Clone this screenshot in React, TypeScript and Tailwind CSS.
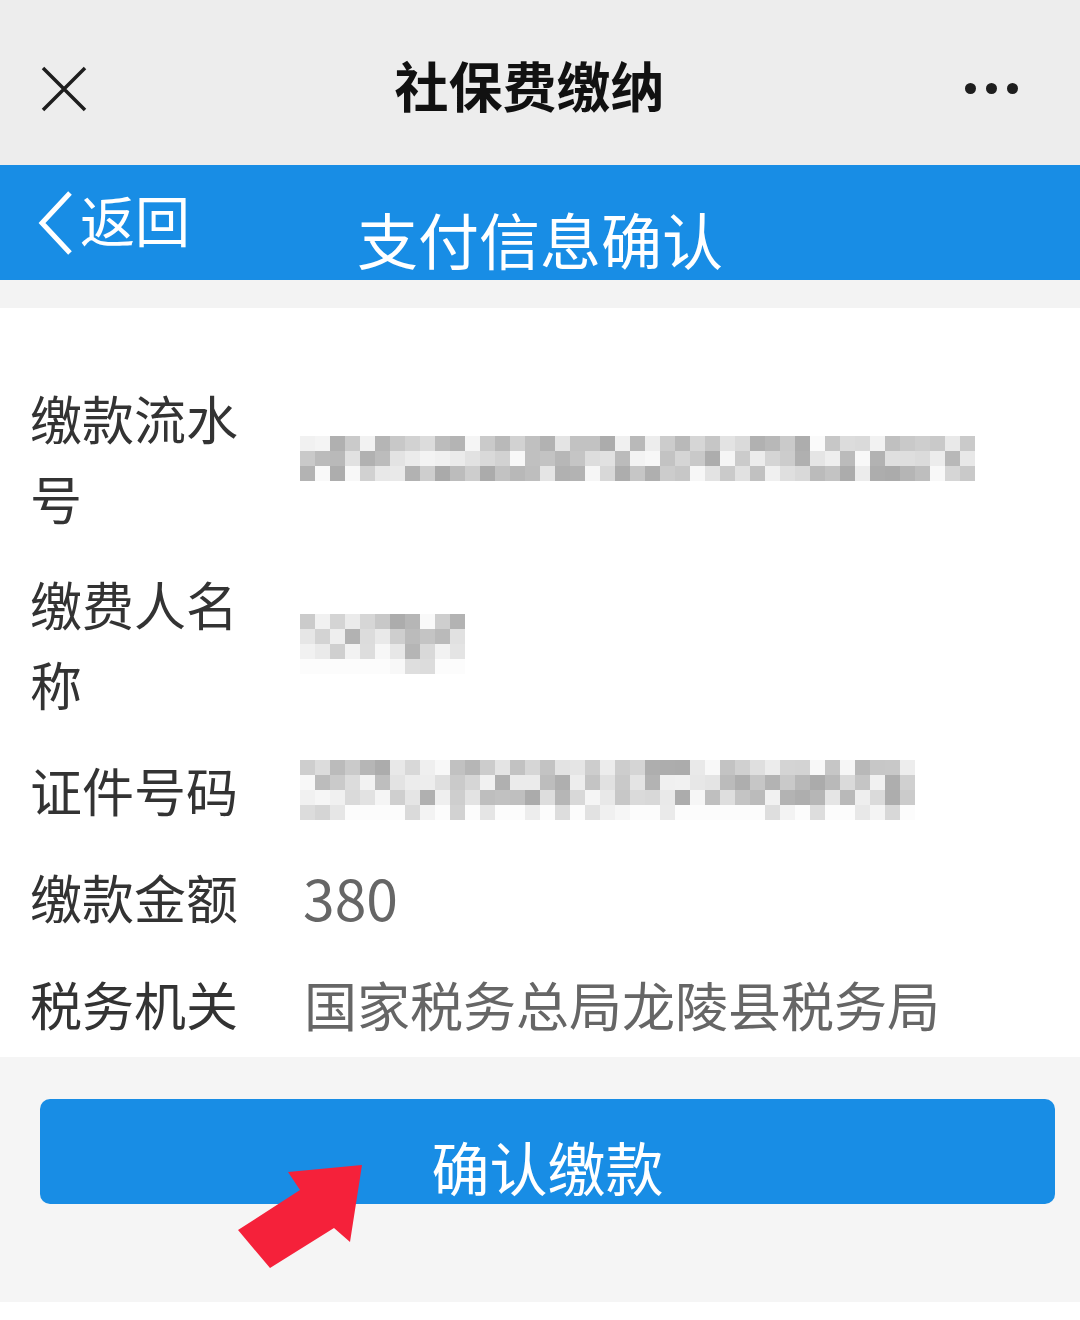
const FONT = "font-['Noto_Sans_CJK_SC','Noto_Sans',sans-serif]";

// pseudo-random grays for the mosaic blur
function mosaic(cols: number, rows: number, seed: number) {
  const cells: string[][] = [];
  let s = seed;
  for (let r = 0; r < rows; r++) {
    const row: string[] = [];
    for (let c = 0; c < cols; c++) {
      s = (s * 9301 + 49297) % 233280;
      const v = s / 233280;
      const fade = r === rows - 1 && rows > 3 ? 40 : 0;
      const g = Math.min(Math.round(170 + v * 80 + fade), 252);
      row.push(`rgb(${g},${g},${g})`);
    }
    cells.push(row);
  }
  return cells;
}

function Blur({ cols, rows, seed, cell = 15 }: { cols: number; rows: number; seed: number; cell?: number }) {
  const cells = mosaic(cols, rows, seed);
  return (
    <div className="flex flex-col">
      {cells.map((row, i) => (
        <div key={i} className="flex">
          {row.map((c, j) => (
            <div key={j} style={{ background: c, width: cell, height: cell }} />
          ))}
        </div>
      ))}
    </div>
  );
}

function Row({ label, children }: { label: string; children: React.ReactNode }) {
  return (
    <div className="flex items-center py-[13px]">
      <div className="w-[270px] shrink-0 pr-[30px] text-[52px] leading-[80px] text-[#333]">{label}</div>
      <div className="flex-1 text-[53px] leading-[80px] text-[#666]">{children}</div>
    </div>
  );
}

export default function App() {
  return (
    <div className={`w-[1080px] h-[1320px] bg-white flex flex-col ${FONT}`}>
      {/* WeChat top bar */}
      <div className="h-[165px] bg-[#ededed] flex items-center px-[40px] pt-[12px]">
        <svg width="48" height="48" viewBox="0 0 48 48" fill="none" className="shrink-0">
          <path d="M3 3 L45 45 M45 3 L3 45" stroke="#1e1e1e" strokeWidth="3.5" />
        </svg>
        <div className="flex-1 text-center text-[54px] font-bold text-[#111] pl-[6px] -mt-[8px]">社保费缴纳</div>
        <div className="flex gap-[10px] pr-[22px] shrink-0">
          <span className="w-[11px] h-[11px] rounded-full bg-[#1e1e1e]" />
          <span className="w-[11px] h-[11px] rounded-full bg-[#1e1e1e]" />
          <span className="w-[11px] h-[11px] rounded-full bg-[#1e1e1e]" />
        </div>
      </div>

      {/* Blue header */}
      <div className="relative h-[115px] bg-[#188de5] text-white">
        <div className="absolute left-[36px] top-[24px] flex items-center">
          <svg width="40" height="68" viewBox="0 0 40 68" fill="none">
            <path d="M34 4 L6 34 L34 64" stroke="white" strokeWidth="5" strokeLinejoin="miter" />
          </svg>
          <span className="text-[55px] leading-[60px] ml-[4px] -mt-[10px]">返回</span>
        </div>
        <div className="pt-[34px] text-center text-[61px] leading-[80px]">支付信息确认</div>
      </div>

      <div className="h-[28px] bg-[#f3f3f3]" />

      {/* Info list */}
      <div className="px-[30px] pt-[57px]">
        <Row label="缴款流水号">
          <Blur cols={45} rows={3} seed={17} />
        </Row>
        <Row label="缴费人名称">
          <Blur cols={11} rows={4} seed={5} />
        </Row>
        <Row label="证件号码">
          <Blur cols={41} rows={4} seed={31} />
        </Row>
        <Row label="缴款金额">
          <span className="pl-[3px] text-[57px]">380</span>
        </Row>
        <Row label="税务机关">
          <span className="pl-[4px]">国家税务总局龙陵县税务局</span>
        </Row>
      </div>

      {/* Bottom action area */}
      <div className="relative h-[245px] bg-[#f5f5f5] pt-[42px] pl-[40px] pr-[25px]">
        <button className="w-full h-[105px] rounded-[10px] bg-[#188de5] text-white text-[58px] pt-[28px] leading-[76px]">
          确认缴款
        </button>
        <svg className="absolute left-0 top-0" width="400" height="245" viewBox="0 1055 400 245">
          <polygon
            points="362,1163 350,1240 334,1226 270,1266 238,1228 300,1188 288,1170"
            fill="#f5213a"
          />
        </svg>
      </div>
      <div className="flex-1 bg-white" />
    </div>
  );
}
